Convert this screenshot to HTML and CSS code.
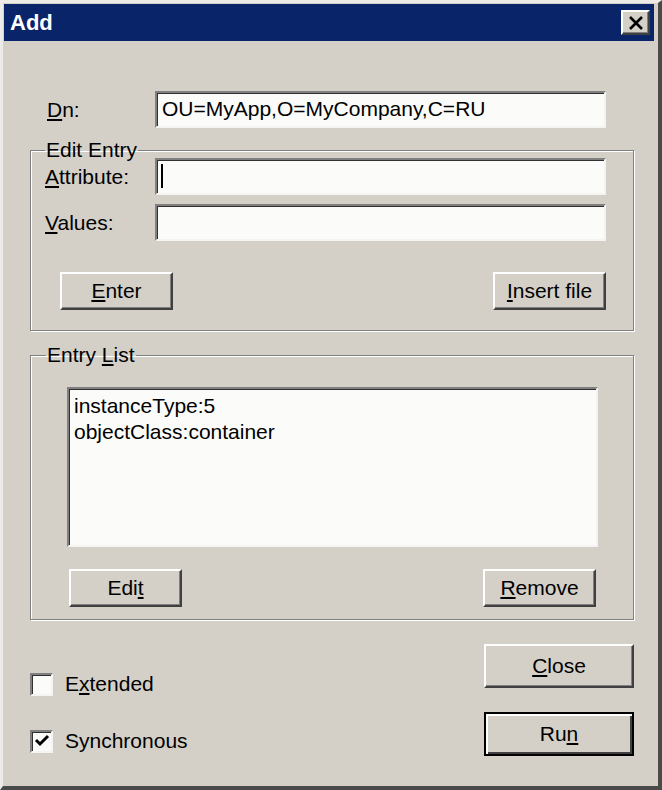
FILE: index.html
```html
<!DOCTYPE html>
<html lang="en">
<head>
  <meta charset="UTF-8" />
  <meta name="viewport" content="width=device-width, initial-scale=1.0" />
  <title>Add</title>
  <link rel="stylesheet" href="styles.css">
</head>
<body>
  <div class="window">
    <div class="titlebar">
      <span class="title">Add</span>
      <button class="close-x" type="button">
        <svg width="16" height="16" viewBox="0 0 16 16">
          <path d="M2 2 L14 14 M14 2 L2 14" stroke="#000" stroke-width="2.6" fill="none" />
        </svg>
      </button>
    </div>

    <div class="content">
      <div class="row dn-row">
        <label><u>D</u>n:</label>
        <div class="field">OU=MyApp,O=MyCompany,C=RU</div>
      </div>

      <fieldset class="group edit-group">
        <legend>Edit Entry</legend>
        <div class="row">
          <label><u>A</u>ttribute:</label>
          <div class="field"><span class="caret"></span></div>
        </div>
        <div class="row values-row">
          <label><u>V</u>alues:</label>
          <div class="field"></div>
        </div>
        <div class="btn-row">
          <button class="btn" type="button"><u>E</u>nter</button>
          <button class="btn" type="button"><u>I</u>nsert file</button>
        </div>
      </fieldset>

      <fieldset class="group list-group">
        <legend>Entry <u>L</u>ist</legend>
        <div class="listbox">
          <div>instanceType:5</div>
          <div>objectClass:container</div>
        </div>
        <div class="btn-row">
          <button class="btn" type="button">Edi<u>t</u></button>
          <button class="btn" type="button"><u>R</u>emove</button>
        </div>
      </fieldset>

      <div class="footer">
        <div class="checks">
          <div class="check">
            <span class="box"></span>
            <span>E<u>x</u>tended</span>
          </div>
          <div class="check">
            <span class="box">
              <svg width="18" height="18" viewBox="0 0 18 18">
                <path d="M3 8 L7 12 L15 4" stroke="#000" stroke-width="3" fill="none" />
              </svg>
            </span>
            <span>Synchronous</span>
          </div>
        </div>
        <div class="actions">
          <button class="btn big" type="button"><u>C</u>lose</button>
          <button class="btn big default" type="button">Ru<u>n</u></button>
        </div>
      </div>
    </div>
  </div>
</body>
</html>
```

FILE: styles.css
```css
body {
  margin: 0;
  background-color: #d4d0c8;
  font-family: "Liberation Sans", Arial, sans-serif;
  font-size: 21px;
  color: #000;
}
.window {
  box-sizing: border-box;
  width: 662px;
  height: 790px;
  padding: 1px 4px 0 1px;
  border-top: 3px solid #ecebe7;
  border-left: 3px solid #ecebe7;
  border-right: 4px solid #4a4a4a;
  border-bottom: 4px solid #4a4a4a;
  background-color: #d4d0c8;
}
.titlebar {
  height: 37px;
  background-color: #0a246a;
  display: flex;
  align-items: center;
  justify-content: space-between;
  padding: 0 4px 0 6px;
}
.title {
  color: #fff;
  font-weight: bold;
  font-size: 22px;
}
.close-x {
  width: 29px;
  height: 25px;
  padding: 0;
  display: flex;
  align-items: center;
  justify-content: center;
  background-color: #d4d0c8;
  border: 2px solid;
  border-color: #fff #404040 #404040 #fff;
  box-shadow: inset -1px -1px 0 #808080;
}
.content {
  padding: 50px 20px 0 26px;
}
.row {
  display: flex;
  align-items: center;
  height: 37px;
}
.row label {
  width: 110px;
  flex-shrink: 0;
}
.dn-row label {
  margin-left: 17px;
  width: 108px;
}
.field {
  box-sizing: border-box;
  flex: 1;
  height: 37px;
  padding: 4px 5px;
  background-color: #fbfbfa;
  border: 2px solid;
  border-color: #808080 #f4f4f2 #f4f4f2 #808080;
  box-shadow: inset 1px 1px 0 #303030;
  white-space: nowrap;
}
.dn-row .field {
  flex: none;
  width: 451px;
}
.caret {
  display: inline-block;
  width: 2px;
  height: 24px;
  background-color: #000;
  margin-left: -1px;
}
.group {
  margin: 0;
  border: 1px solid #808080;
  box-shadow: 1px 1px 0 #fff, inset 1px 1px 0 #fff;
}
.group legend {
  line-height: 16px;
  padding: 0 1px;
}
.edit-group {
  margin-top: 14px;
  padding: 0 27px 20px 14px;
}
.values-row {
  margin-top: 9px;
}
.btn-row {
  display: flex;
  justify-content: space-between;
}
.edit-group .btn-row {
  margin-top: 31px;
  padding-left: 15px;
}
.btn {
  box-sizing: border-box;
  width: 113px;
  height: 38px;
  font-family: inherit;
  font-size: 21px;
  color: #000;
  background-color: #d4d0c8;
  border: 2px solid;
  border-color: #fff #404040 #404040 #fff;
  box-shadow: inset -1px -1px 0 #808080;
  padding: 0;
}
.list-group {
  margin-top: 16px;
  padding: 24px 35px 12px 36px;
}
.list-group legend {
  margin-left: -21px;
}
.listbox {
  box-sizing: border-box;
  height: 160px;
  padding: 4px 5px;
  line-height: 26px;
  background-color: #fbfbfa;
  border: 2px solid;
  border-color: #808080 #f4f4f2 #f4f4f2 #808080;
  box-shadow: inset 1px 1px 0 #303030;
}
.list-group .btn-row {
  margin-top: 22px;
  padding: 0 2px;
}
.footer {
  display: flex;
  justify-content: space-between;
}
.checks {
  margin-top: 52px;
  display: flex;
  flex-direction: column;
  gap: 33px;
}
.check {
  display: flex;
  align-items: center;
  height: 24px;
}
.box {
  box-sizing: border-box;
  width: 23px;
  height: 23px;
  margin-right: 12px;
  display: flex;
  align-items: center;
  justify-content: center;
  background-color: #fbfbfa;
  border: 2px solid;
  border-color: #808080 #f4f4f2 #f4f4f2 #808080;
  box-shadow: inset 1px 1px 0 #303030;
}
.actions {
  margin-top: 24px;
  display: flex;
  flex-direction: column;
  gap: 24px;
}
.btn.big {
  width: 150px;
  height: 44px;
}
.btn.default {
  border: 2px solid #000;
  box-shadow: inset 2px 2px 0 #fff, inset -2px -2px 0 #404040;
}
```
